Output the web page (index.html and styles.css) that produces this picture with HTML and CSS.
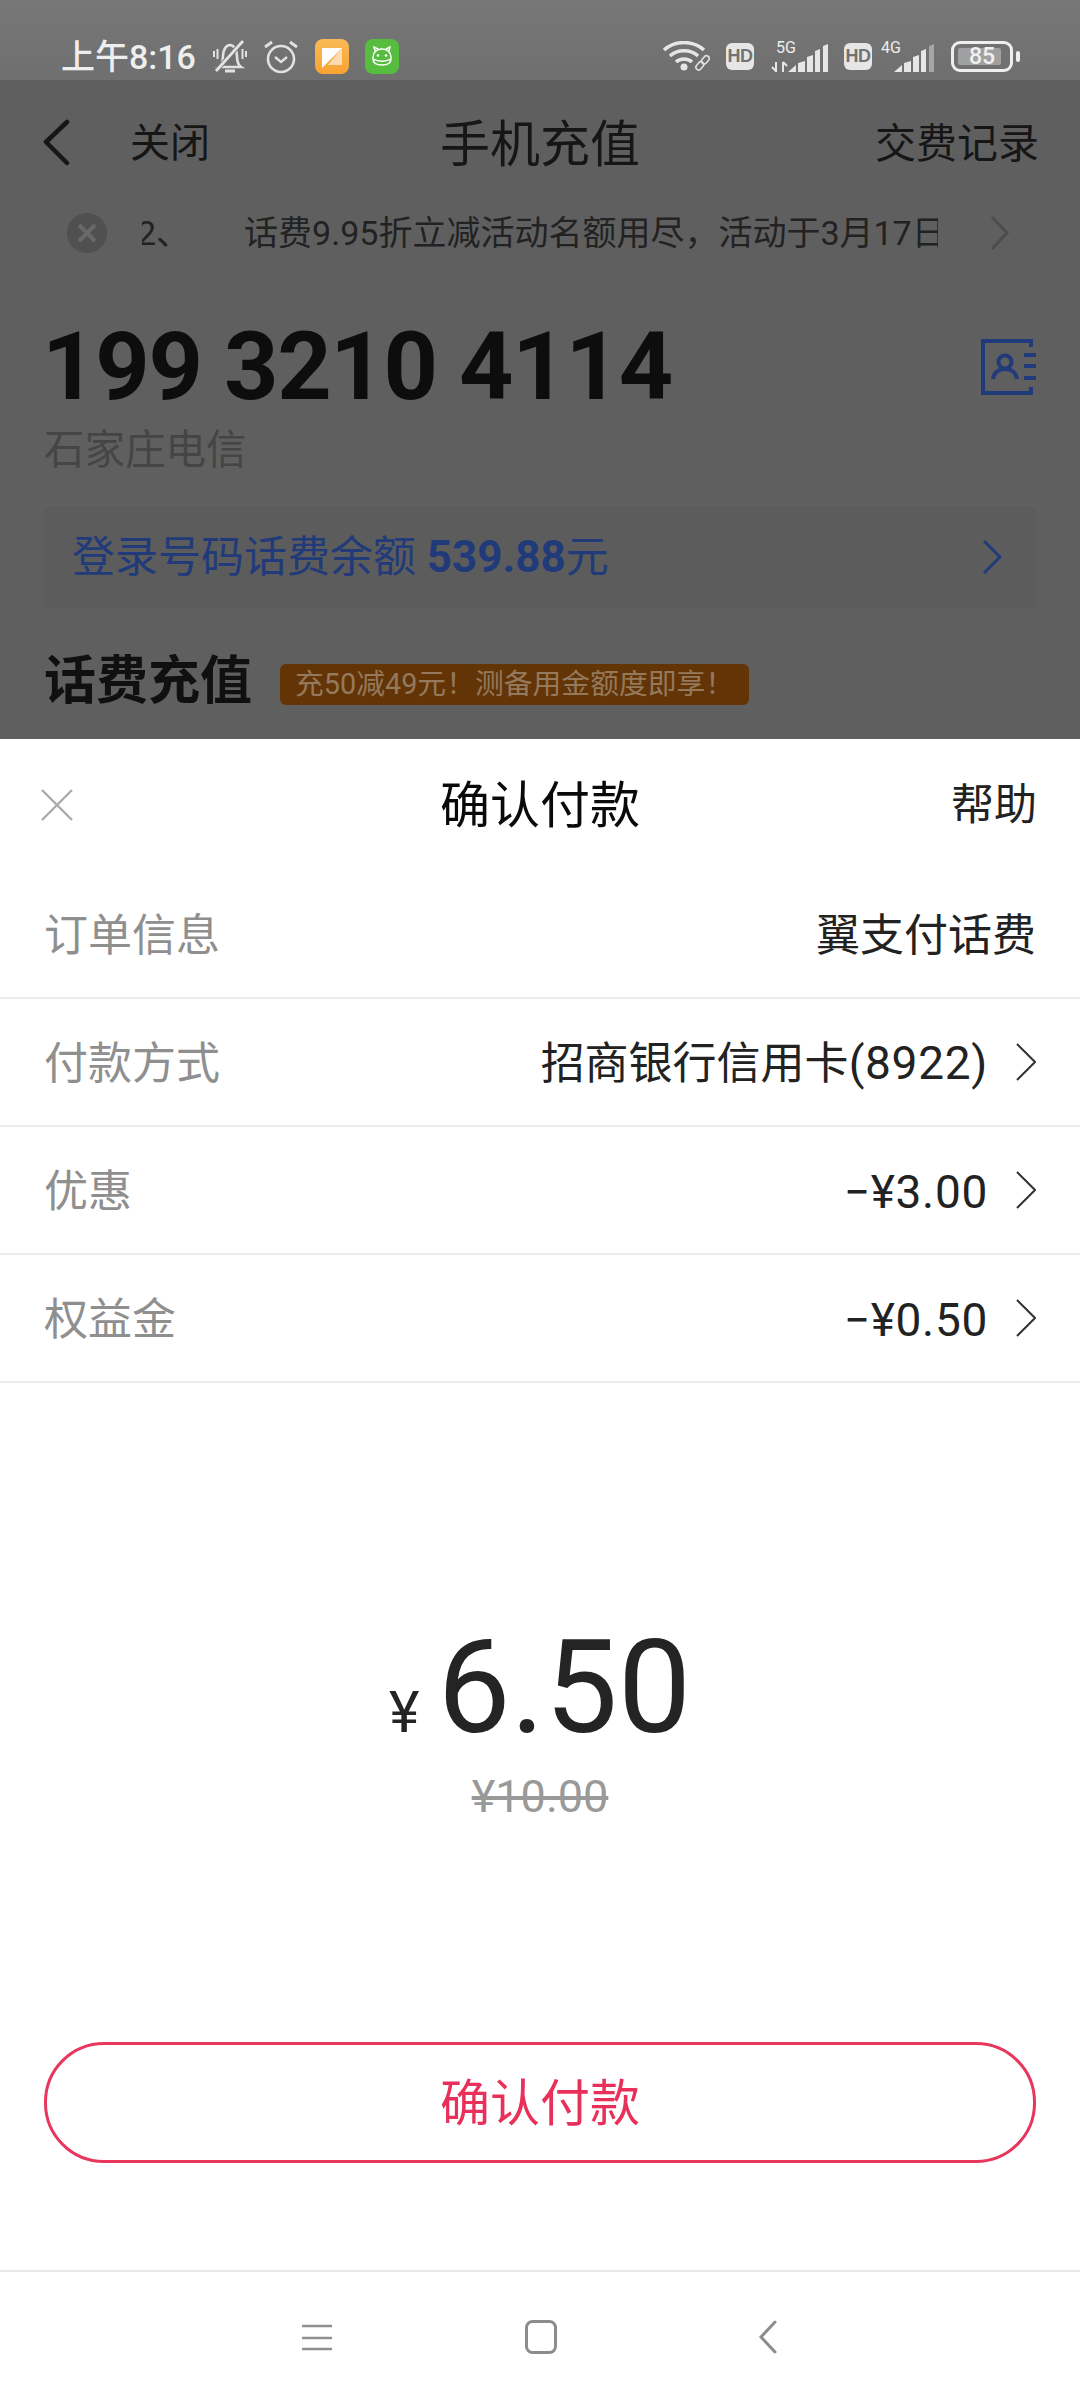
FILE: index.html
```html
<!DOCTYPE html>
<html lang="zh-CN">
<head>
<meta charset="utf-8">
<title>确认付款</title>
<link rel="stylesheet" href="styles.css">
</head>
<body>
<div class="screen">
  <div class="backdrop">
    <header class="status">
      <div class="status-left">
        <span class="time">上午8:16</span>
        <svg class="ic-bell" viewBox="0 0 34 34"><path d="M6 27c3-2 4-6 4-11 0-6 3-11 7-11s7 5 7 11c0 5 1 9 4 11z" fill="none" stroke="#e2e2e2" stroke-width="2.600"/><path d="M12 31h10" stroke="#e2e2e2" stroke-width="3"/><path d="M30 1 3 31" stroke="#727272" stroke-width="4.500"/><path d="M30 1 3 31" stroke="#e2e2e2" stroke-width="2.800"/><path d="M1 11v6M4.500 9v10M29.500 9v10M33 11v6" stroke="#e2e2e2" stroke-width="2"/></svg>
        <svg class="ic-alarm" viewBox="0 0 34 34"><circle cx="17" cy="19" r="13" fill="none" stroke="#e2e2e2" stroke-width="2.600"/><path d="M11 17l6 5 6-5" fill="none" stroke="#e2e2e2" stroke-width="2.400"/><path d="M1 7l7-5M33 7l-7-5" stroke="#e2e2e2" stroke-width="2.800"/></svg>
        <svg class="ic-app" viewBox="0 0 34 35"><defs><linearGradient id="og" x1="0" y1="0" x2="0" y2="1"><stop offset="0" stop-color="#f9ba55"/><stop offset="1" stop-color="#f8a333"/></linearGradient></defs><rect width="34" height="35" rx="8" fill="url(#og)"/><path d="M27 9v17H13z" fill="#fbdcb0"/><path d="M7 29V9h20z" fill="#fff"/></svg>
        <svg class="ic-app" viewBox="0 0 34 35"><rect width="34" height="35" rx="8" fill="#57bd3f"/><path d="M8 18c0-5 4-8 9-8s9 3 9 8v2c0 4-4 6-9 6s-9-2-9-6zM10 12 9 8l4 2M24 12l1-4-4 2M8 20c5 3 13 3 18 0" fill="none" stroke="#fff" stroke-width="1.400"/><circle cx="13" cy="16.500" r="1.300" fill="#fff"/><circle cx="21" cy="16.500" r="1.300" fill="#fff"/></svg>
      </div>
      <div class="status-right">
        <svg class="ic-wifi" viewBox="0 0 47 32"><path d="M1 9C12-1 30-1 41 9M7 15c7-7 21-7 28 0M13 21c4-4 12-4 16 0" fill="none" stroke="#e6e6e6" stroke-width="3.400"/><circle cx="21" cy="26" r="3.500" fill="#e6e6e6"/><g fill="none" stroke="#e0e0e0" stroke-width="1.600"><rect x="32.500" y="22" width="9" height="5.500" rx="2.700" transform="rotate(-50 37 25)"/><rect x="38" y="16" width="9" height="5.500" rx="2.700" transform="rotate(-50 42.500 19)"/></g></svg>
        <span class="hd">HD</span>
        <span class="sig">
          <span class="sig-label">5G</span>
          <svg class="ic-sig-5" viewBox="0 0 57 30"><path d="M5 20v10M1 25l4 4M12 20v10M12 20l4 4" fill="none" stroke="#e6e6e6" stroke-width="2"/><path d="M17 30l8-7v7zM27 30V21l7-2v11zM36 30V15l6-2v17zM44 30V9l5-2v23zM52 30V4l5-2v28z" fill="#e6e6e6"/></svg>
        </span>
        <span class="hd">HD</span>
        <span class="sig sig-4">
          <span class="sig-label">4G</span>
          <svg class="ic-sig-4" viewBox="0 0 41 30"><path d="M1 30l8-7v7zM11 30V21l7-2v11zM20 30V15l6-2v17zM28 30V9l5-2v23z" fill="#e6e6e6"/><path d="M36 30V4l5-2v28z" fill="#a6a6a6"/></svg>
        </span>
        <span class="battery"><span class="battery-fill"></span><span class="battery-num">85</span></span>
        <span class="battery-tip"></span>
      </div>
    </header>
    <nav class="topnav">
      <svg class="nav-back" viewBox="0 0 28 48"><path d="M25 3 4 23l21 21" fill="none" stroke="#161616" stroke-width="4.500" stroke-linecap="round" stroke-linejoin="round"/></svg>
      <span class="nav-close">关闭</span>
      <span class="nav-title">手机充值</span>
      <span class="nav-record">交费记录</span>
    </nav>
    <div class="notice">
      <svg class="notice-x" viewBox="0 0 40 40"><circle cx="20" cy="20" r="20" fill="#505050"/><path d="M12 12l16 16M28 12 12 28" stroke="#686868" stroke-width="4"/></svg>
      <div class="notice-clip"><span class="notice-text notice-lead">2、</span><span class="notice-text notice-main">话费9.95折立减活动名额用尽，活动于3月17日</span></div>
      <svg class="notice-next" viewBox="0 0 20 36"><path d="M3 2l15 16L3 34" fill="none" stroke="#4c4c4c" stroke-width="3"/></svg>
    </div>
    <section class="account">
      <div class="account-row">
        <div class="phone">199 3210 4114</div>
        <svg class="contact" viewBox="0 0 56 58"><path d="M50 9V3H2v52h48v-6" fill="none" stroke="#213a7a" stroke-width="4"/><circle cx="24" cy="24" r="6.500" fill="none" stroke="#213a7a" stroke-width="4"/><path d="M12 41c1-7 6-10 12-10s11 3 12 10" fill="none" stroke="#213a7a" stroke-width="4"/><path d="M43 17h12M43 28h12M43 40h12" stroke="#213a7a" stroke-width="4"/></svg>
      </div>
      <div class="city">石家庄电信</div>
      <div class="balance">
        <span>登录号码话费余额 <b>539.88</b>元</span>
        <svg class="balance-next" viewBox="0 0 20 34"><path d="M2 1l16 16L2 33" fill="none" stroke="#213a7a" stroke-width="3"/></svg>
      </div>
      <div class="section-head">
        <h2>话费充值</h2>
        <span class="tag">充50减49元！测备用金额度即享！</span>
      </div>
    </section>
  </div>

  <main class="sheet">
    <div class="sheet-head">
      <svg class="sheet-x" viewBox="0 0 32 32"><path d="M1 1l30 30M31 1 1 31" stroke="#aaa" stroke-width="2.400"/></svg>
      <span class="sheet-title">确认付款</span>
      <span class="sheet-help">帮助</span>
    </div>
    <ul class="rows">
      <li class="row"><span class="row-label">订单信息</span><span class="row-value">翼支付话费</span></li>
      <li class="row"><span class="row-label">付款方式</span><span class="row-value">招商银行信用卡<span class="row-num">(8922)</span></span><svg class="chev" viewBox="0 0 20 38"><path d="M1 1l18 18L1 37" fill="none" stroke="#333" stroke-width="2"/></svg></li>
      <li class="row"><span class="row-label">优惠</span><span class="row-value row-num">−¥3.00</span><svg class="chev" viewBox="0 0 20 38"><path d="M1 1l18 18L1 37" fill="none" stroke="#333" stroke-width="2"/></svg></li>
      <li class="row"><span class="row-label">权益金</span><span class="row-value row-num">−¥0.50</span><svg class="chev" viewBox="0 0 20 38"><path d="M1 1l18 18L1 37" fill="none" stroke="#333" stroke-width="2"/></svg></li>
    </ul>
    <div class="amount">
      <div class="amount-now"><span class="yen">¥</span><span class="amount-num">6.50</span></div>
      <div class="amount-old">¥10.00</div>
    </div>
    <div class="action"><button class="pay">确认付款</button></div>
    <footer class="sysnav">
      <svg class="sys-menu" viewBox="0 0 30 27"><path d="M1 2h28M1 14h28M1 25h28" stroke="#909090" stroke-width="2.600" stroke-linecap="round"/></svg>
      <svg class="sys-home" viewBox="0 0 32 34"><rect x="1.500" y="1.500" width="29" height="31" rx="6" fill="none" stroke="#8c8c8c" stroke-width="3"/></svg>
      <svg class="sys-back" viewBox="0 0 18 34"><path d="M16 2 2 17l14 15" fill="none" stroke="#8c8c8c" stroke-width="3" stroke-linecap="round"/></svg>
    </footer>
  </main>
</div>
</body>
</html>
```
FILE: styles.css
```css
* { box-sizing: border-box; }
html, body { margin: 0; padding: 0; }
body {
  width: 1080px;
  height: 2400px;
  overflow: hidden;
  background: #fff;
  font-family: Roboto, "Noto Sans CJK SC", sans-serif;
}
.screen { width: 1080px; height: 2400px; display: flex; flex-direction: column; }

/* Dimmed page behind the sheet */
.backdrop { height: 739px; overflow: hidden; background: #5f5f5f; flex: none; }
.status {
  height: 80px;
  background: linear-gradient(#777, #6f6f6f);
  display: flex;
  justify-content: space-between;
  align-items: center;
  padding: 0 60px 0 61px;
  color: #eee;
}
.status-left, .status-right { display: flex; align-items: center; height: 80px; padding-top: 33px; }
.time { font-size: 34px; font-weight: 500; line-height: 40px; width: 152px; white-space: nowrap; }
.ic-bell { width: 34px; height: 34px; margin-right: 17px; }
.ic-alarm { width: 34px; height: 34px; margin-right: 17px; }
.ic-app { width: 34px; height: 35px; margin-right: 16px; }
.ic-wifi { width: 47px; height: 32px; margin-right: 16px; }
.hd {
  width: 28px; height: 27px; border-radius: 6px; background: #e6e6e6; color: #727272;
  font: 700 18px/27px "Liberation Sans", sans-serif; text-align: center; letter-spacing: -.5px;
}
.sig { position: relative; width: 57px; height: 30px; margin: 0 16px 0 17px; display: flex; align-items: flex-end; }
.sig-4 { width: 53px; margin: 0 17px 0 9px; justify-content: flex-end; }
.sig-label { position: absolute; left: 5px; top: -3px; font-size: 16px; line-height: 18px; color: #eee; }
.sig-4 .sig-label { left: 0; top: -3px; }
.ic-sig-5 { width: 57px; height: 30px; display: block; }
.ic-sig-4 { width: 41px; height: 30px; display: block; }
.battery {
  position: relative; width: 62px; height: 31px; border: 3.5px solid #eee; border-radius: 9px;
  display: flex; align-items: center; justify-content: center;
}
.battery-fill { position: absolute; left: 4px; top: 4px; bottom: 4px; right: 9px; background: #a0a0a0; border-radius: 2px; }
.battery-num { position: relative; font-weight: 500; font-size: 23px; line-height: 24px; color: #f0f0f0; }
.battery-tip { width: 4px; height: 11px; border-radius: 2px; background: #eee; margin-left: 3px; }

.topnav { position: relative; height: 126px; display: flex; align-items: center; padding: 0 41px 0 42px; color: #161616; }
.nav-back { width: 28px; height: 48px; margin-right: 60px; }
.nav-close { font-size: 40px; line-height: 56px; margin-top: 2px; }
.nav-title { position: absolute; left: 0; right: 0; text-align: center; font-size: 50px; line-height: 66px; margin-top: 3px; }
.nav-record { margin-left: auto; font-size: 41px; line-height: 56px; margin-top: 2px; }

.notice { height: 54px; display: flex; align-items: center; padding-left: 67px; color: #222; }
.notice-x { width: 40px; height: 40px; flex: none; }
.notice-clip { width: 796px; margin-left: 35px; overflow: hidden; white-space: nowrap; display: flex; }
.notice-text { font-size: 34px; line-height: 48px; flex: none; }
.notice-lead { margin-left: -5px; }
.notice-main { margin-left: 54px; }
.notice-next { width: 20px; height: 36px; margin-left: 51px; flex: none; }

.account { padding: 0 44px; }
.account-row { display: flex; justify-content: space-between; align-items: center; height: 110px; margin-top: 52px; }
.phone { font-weight: 700; font-size: 95px; line-height: 110px; letter-spacing: -1.3px; color: #0d0d0d; white-space: nowrap; margin-left: -2px; }
.contact { width: 56px; height: 58px; margin-right: -1px; margin-left: -2px; }
.city { font-size: 40.5px; line-height: 56px; color: #454545; margin-top: 0; }
.balance {
  height: 102px; margin-top: 28px; border-radius: 8px; background: #5c5c5c; color: #213a7a;
  display: flex; justify-content: space-between; align-items: center; padding: 0 34px 0 28px;
  font-size: 43px; line-height: 60px;
}
.balance b { font-weight: 700; font-size: 44px; }
.balance-next { width: 20px; height: 34px; }
.section-head { display: flex; align-items: center; margin-top: 39px; height: 70px; }
.section-head h2 { margin: 0; font-size: 52px; line-height: 70px; font-weight: 700; color: #101010; }
.tag {
  margin: 4px 0 0 28px; height: 41px; padding: 0 15px; border-radius: 6px; background: #633406; color: #94795c;
  font-size: 28.8px; line-height: 41px; white-space: nowrap;
}

/* Payment sheet */
.sheet { flex: 1; background: #fff; display: flex; flex-direction: column; min-height: 0; }
.sheet-head { position: relative; height: 132px; display: flex; align-items: center; justify-content: space-between; padding: 0 43px 0 41px; flex: none; }
.sheet-x { width: 32px; height: 32px; }
.sheet-title { position: absolute; left: 0; right: 0; text-align: center; font-size: 50px; line-height: 66px; color: #0a0a0a; margin-top: 2px; }
.sheet-help { font-size: 43px; line-height: 60px; color: #222; }
.rows { list-style: none; margin: 0; padding: 0; flex: none; }
.row { height: 128px; display: flex; align-items: center; padding: 0 44px; border-bottom: 2px solid #ebebeb; }
.row-label { font-size: 44px; line-height: 60px; color: #8f8f8f; margin-right: auto; padding-top: 3px; }
.row-value { font-size: 44px; line-height: 60px; color: #222; padding-top: 3px; }
.row-num { font-size: 46px; letter-spacing: .7px; }
.chev { width: 20px; height: 38px; margin-left: 28px; }
.amount { height: 659px; display: flex; flex-direction: column; align-items: center; flex: none; }
.amount-now { display: flex; align-items: baseline; margin-top: 230px; color: #242424; height: 150px; }
.yen { font-size: 58px; line-height: 150px; margin-right: 18px; }
.amount-num { font-size: 130px; line-height: 150px; }
.amount-old { font-size: 45px; line-height: 60px; color: #999; text-decoration: line-through; margin-top: 4px; }
.action { padding: 0 44px; flex: none; }
.pay {
  display: block; width: 100%; height: 121px; border: 3px solid #e8365d; border-radius: 60px; background: #fff;
  color: #e8305a; font-family: inherit; font-size: 50px; line-height: 66px; padding: 2px 0 0;
}
.sysnav {
  margin-top: auto; height: 130px; border-top: 2px solid #e8e8e8; display: flex; align-items: center; flex: none;
  padding: 2px 0 0 302px; position: relative;
}
.sys-menu { width: 30px; height: 27px; }
.sys-home { width: 32px; height: 34px; margin-left: 193px; }
.sys-back { width: 18px; height: 34px; margin-left: 202px; }
```
